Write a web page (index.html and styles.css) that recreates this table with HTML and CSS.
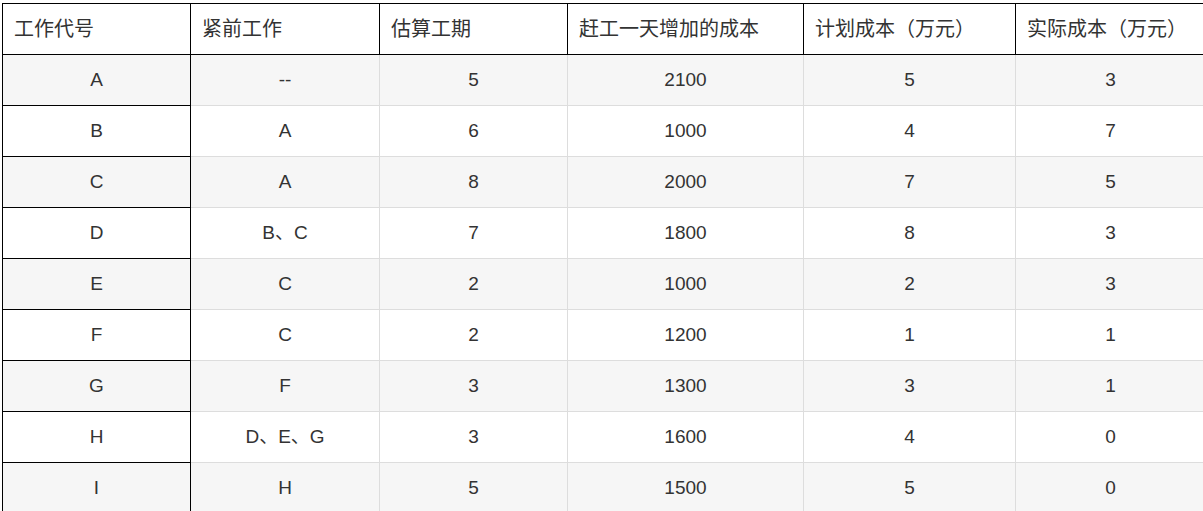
FILE: index.html
```html
<!DOCTYPE html>
<html>
<head>
<meta charset="utf-8">
<link rel="stylesheet" href="styles.css">
</head>
<body>
<div class="wrap">
<table class="grid">
<colgroup>
<col class="c1"><col class="c2"><col class="c3"><col class="c4"><col class="c5"><col class="c6">
</colgroup>
<thead>
<tr><th>工作代号</th><th>紧前工作</th><th>估算工期</th><th>赶工一天增加的成本</th><th>计划成本（万元）</th><th>实际成本（万元）</th></tr>
</thead>
<tbody>
<tr><td class="key">A</td><td>--</td><td>5</td><td>2100</td><td>5</td><td>3</td></tr>
<tr><td class="key">B</td><td>A</td><td>6</td><td>1000</td><td>4</td><td>7</td></tr>
<tr><td class="key">C</td><td>A</td><td>8</td><td>2000</td><td>7</td><td>5</td></tr>
<tr><td class="key">D</td><td>B、C</td><td>7</td><td>1800</td><td>8</td><td>3</td></tr>
<tr><td class="key">E</td><td>C</td><td>2</td><td>1000</td><td>2</td><td>3</td></tr>
<tr><td class="key">F</td><td>C</td><td>2</td><td>1200</td><td>1</td><td>1</td></tr>
<tr><td class="key">G</td><td>F</td><td>3</td><td>1300</td><td>3</td><td>1</td></tr>
<tr><td class="key">H</td><td>D、E、G</td><td>3</td><td>1600</td><td>4</td><td>0</td></tr>
<tr><td class="key">I</td><td>H</td><td>5</td><td>1500</td><td>5</td><td>0</td></tr>
</tbody>
</table>
</div>
</body>
</html>
```
FILE: styles.css
```css
html, body {
  margin: 0;
  padding: 0;
  background: #fff;
  overflow: hidden;
}
.wrap {
  padding: 3px 0 0 2px;
}
.grid {
  border-collapse: collapse;
  table-layout: fixed;
  width: 1203px;
  font-family: "Liberation Sans", "Noto Sans CJK SC", sans-serif;
  font-size: 19px;
  line-height: 22px;
  color: #333;
}
.c1 { width: 188px; }
.c2 { width: 189px; }
.c3 { width: 188px; }
.c4 { width: 236px; }
.c5 { width: 212px; }
.c6 { width: 190px; }
.grid th {
  border: 1px solid #000;
  height: 51px;
  padding: 0 11px;
  text-align: left;
  font-weight: normal;
  font-size: 20px;
  box-sizing: border-box;
  background: #fff;
}
.grid td {
  border: 1px solid #ddd;
  height: 51px;
  padding: 0 11px;
  text-align: center;
  box-sizing: border-box;
}
.grid td.key {
  border: 1px solid #000;
}
.grid tbody tr:nth-child(odd) td {
  background: #f6f6f6;
}
```
